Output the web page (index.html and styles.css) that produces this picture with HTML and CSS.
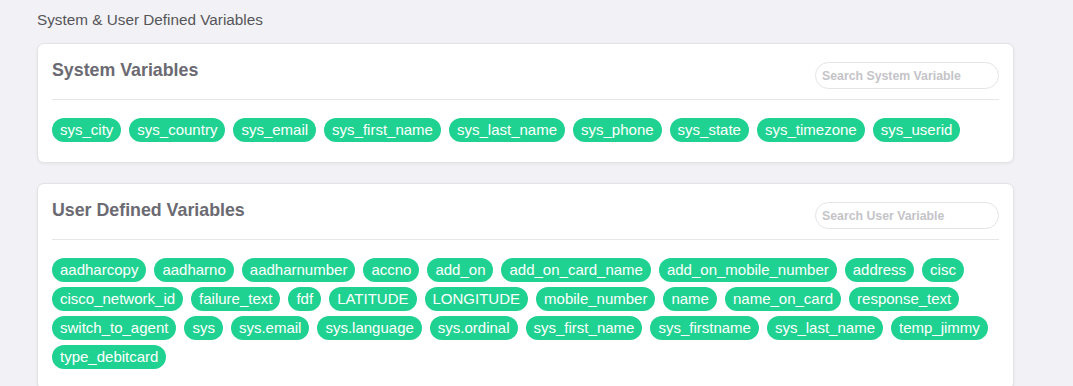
FILE: index.html
```html
<!DOCTYPE html>
<html lang="en">
<head>
    <meta charset="UTF-8">
    <meta name="viewport" content="width=device-width, initial-scale=1.0">
    <title>System &amp; User Defined Variables</title>
    <link rel="stylesheet" href="styles.css">
</head>
<body>
    <div class="page">
        <div class="page-title">System &amp; User Defined Variables</div>

        <div class="card">
            <div class="card-header">
                <h2 class="card-title">System Variables</h2>
                <input type="text" class="search" placeholder="Search System Variable">
            </div>
            <div class="divider"></div>
            <div class="chips">
                <span class="chip">sys_city</span>
                <span class="chip">sys_country</span>
                <span class="chip">sys_email</span>
                <span class="chip">sys_first_name</span>
                <span class="chip">sys_last_name</span>
                <span class="chip">sys_phone</span>
                <span class="chip">sys_state</span>
                <span class="chip">sys_timezone</span>
                <span class="chip">sys_userid</span>
            </div>
        </div>

        <div class="card">
            <div class="card-header">
                <h2 class="card-title">User Defined Variables</h2>
                <input type="text" class="search" placeholder="Search User Variable">
            </div>
            <div class="divider"></div>
            <div class="chips">
                <span class="chip">aadharcopy</span>
                <span class="chip">aadharno</span>
                <span class="chip">aadharnumber</span>
                <span class="chip">accno</span>
                <span class="chip">add_on</span>
                <span class="chip">add_on_card_name</span>
                <span class="chip">add_on_mobile_number</span>
                <span class="chip">address</span>
                <span class="chip">cisc</span>
                <span class="chip">cisco_network_id</span>
                <span class="chip">failure_text</span>
                <span class="chip">fdf</span>
                <span class="chip">LATITUDE</span>
                <span class="chip">LONGITUDE</span>
                <span class="chip">mobile_number</span>
                <span class="chip">name</span>
                <span class="chip">name_on_card</span>
                <span class="chip">response_text</span>
                <span class="chip">switch_to_agent</span>
                <span class="chip">sys</span>
                <span class="chip">sys.email</span>
                <span class="chip">sys.language</span>
                <span class="chip">sys.ordinal</span>
                <span class="chip">sys_first_name</span>
                <span class="chip">sys_firstname</span>
                <span class="chip">sys_last_name</span>
                <span class="chip">temp_jimmy</span>
                <span class="chip">type_debitcard</span>
            </div>
        </div>
    </div>
</body>
</html>
```

FILE: styles.css
```css
* {
    margin: 0;
    padding: 0;
    box-sizing: border-box;
}

body {
    font-family: "Liberation Sans", Arial, Helvetica, sans-serif;
    background: #f2f2f6;
    overflow: hidden;
}

.page {
    padding: 11px 59px 0 37px;
}

.page-title {
    font-size: 15.3px;
    line-height: 18px;
    color: #555559;
    margin-bottom: 14px;
}

.card {
    background: #ffffff;
    border: 1px solid #e2e2e7;
    border-radius: 7px;
    box-shadow: 0 1px 3px rgba(0, 0, 0, 0.06);
    padding: 18px 14px 20px 14px;
    margin-bottom: 20px;
}

.card-header {
    display: flex;
    justify-content: space-between;
    align-items: flex-start;
    height: 27px;
}

.card-title {
    font-size: 17.8px;
    line-height: 16px;
    font-weight: 700;
    color: #6b6a72;
}

.search {
    width: 184px;
    height: 27px;
    border: 1px solid #e4e4e8;
    border-radius: 14px;
    padding: 0 6px;
    font-family: inherit;
    font-size: 12.3px;
    font-weight: 700;
    color: #555;
    background: #ffffff;
    outline: none;
}

.search::placeholder {
    color: #c4c4c8;
}

.divider {
    height: 1px;
    background: #e6e6ea;
    margin-top: 10px;
    margin-bottom: 18px;
}

.chips {
    display: flex;
    flex-wrap: wrap;
    gap: 5px 8px;
}

.chip {
    display: inline-block;
    height: 24px;
    line-height: 24px;
    padding: 0 8px;
    border-radius: 12px;
    background: #1fd291;
    color: #ffffff;
    font-size: 15px;
    white-space: nowrap;
}
```
